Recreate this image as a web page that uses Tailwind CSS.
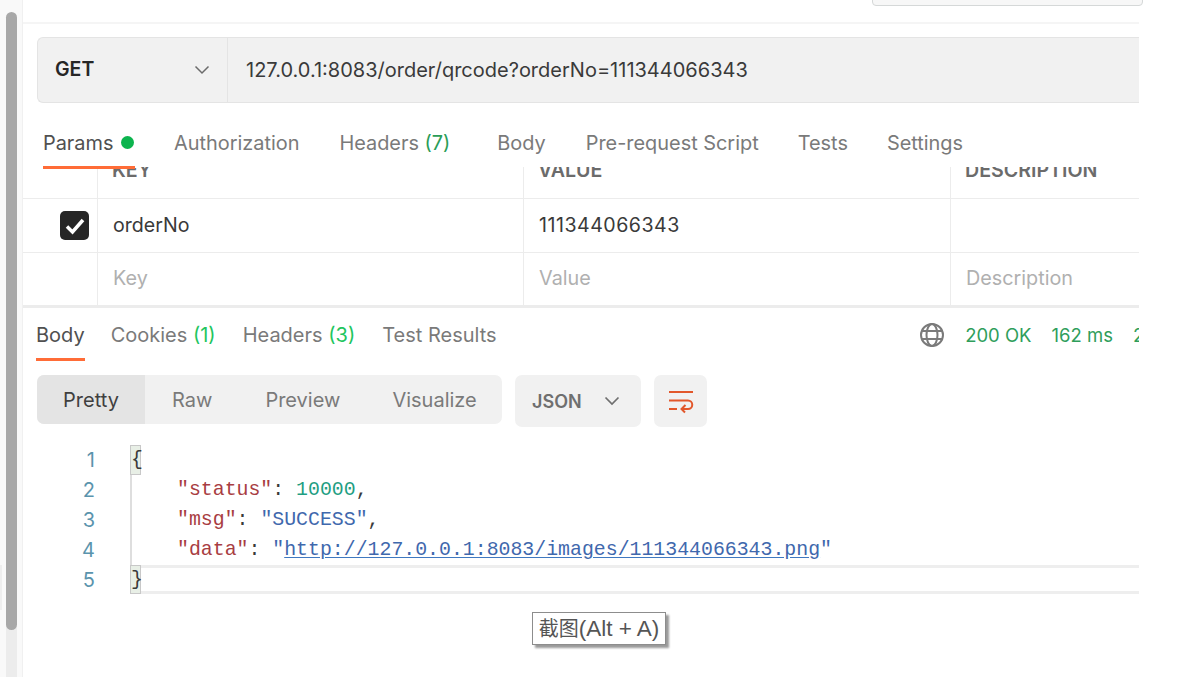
<!DOCTYPE html>
<html lang="en">
<head>
    <meta charset="UTF-8">
    <meta name="viewport" content="width=device-width, initial-scale=1.0">
    <title>Postman</title>
    <script src="https://cdn.jsdelivr.net/npm/@tailwindcss/browser@4"></script>
</head>
<body class="relative h-[677px] w-[1179px] overflow-hidden bg-white font-['Inter',sans-serif]">
    <div class="flex h-full">
        <!-- window scrollbar -->
        <div class="flex w-[23px] shrink-0 flex-col border-r border-[#f0f0f0] bg-[#f9f9f9] pl-[6px] pr-[5px] pt-[12px]">
            <div class="relative z-10 h-[618px] rounded-full bg-[#a8a8a8]"></div>
            <div class="-mt-[6px] flex-1 bg-[#ececec]"></div>
        </div>

        <main class="w-[1116px] shrink-0 overflow-hidden">
            <div class="h-[24px] border-b-2 border-[#f5f5f5]"></div>

            <!-- url bar -->
            <div class="ml-[14px] mt-[13px] flex h-[66px] rounded-l-[6px] border-y border-l border-[#e4e4e4] bg-[#f1f1f1] text-[20px]">
                <div class="flex w-[190px] items-center justify-between border-r border-[#e4e4e4] pl-[17px] pr-[17px]">
                    <span class="text-[19.5px] font-semibold text-[#262626]">GET</span>
                    <svg class="h-[16px] w-[16px] text-[#6b6b6b]" viewBox="0 0 16 16" fill="none" stroke="currentColor" stroke-width="1.5"><path d="M1.5 4.5 8 11l6.500-6.500"/></svg>
                </div>
                <div class="flex items-center pl-[18px] text-[#3a3a3a]">127.0.0.1:8083/order/qrcode?orderNo=111344066343</div>
            </div>

            <!-- request tabs -->
            <div class="ml-[20px] mt-[24px] flex h-[40px] items-start gap-[40px] text-[19.9px] leading-[32px] text-[#7a7a7a]">
                <div class="flex h-[40px] w-[91px] items-start gap-[8px] text-[#505050]">Params <span class="mt-[9px] h-[13px] w-[13px] shrink-0 rounded-full bg-[#0cb44e]"></span></div>
                <div>Authorization</div>
                <div>Headers <span class="text-[#2a9d57]">(7)</span></div>
                <div class="ml-[7px]">Body</div>
                <div>Pre-request Script</div>
                <div class="-ml-[1px]">Tests</div>
                <div class="-ml-[1px]">Settings</div>
            </div>

            <!-- params table -->
            <div class="relative">
                <div class="absolute left-[20px] top-[-1px] z-10 h-[3px] w-[92px] bg-[#ff6c37]"></div>
                <div class="grid h-[32px] grid-cols-[75px_426px_427px_1fr] overflow-hidden border-b border-[#ececec] text-[19.6px] font-semibold text-[#6b6b6b]">
                    <div class="border-r border-[#ececec]"></div>
                    <div class="border-r border-[#ececec] pl-[14px]"><div class="-mt-[11px]">KEY</div></div>
                    <div class="border-r border-[#ececec] pl-[14px]"><div class="-mt-[11px]">VALUE</div></div>
                    <div class="pl-[14px]"><div class="-mt-[11px]">DESCRIPTION</div></div>
                </div>
                <div class="grid h-[54px] grid-cols-[75px_426px_427px_1fr] items-stretch border-b border-[#ececec] text-[19.6px] text-[#3a3a3a]">
                    <div class="flex items-center justify-end border-r border-[#ececec] pr-[8px]">
                        <span class="flex h-[29px] w-[29px] items-center justify-center rounded-[5px] bg-[#262626]">
                            <svg class="h-[20px] w-[20px]" viewBox="0 0 20 20" fill="none" stroke="white" stroke-width="3.5"><path d="M2 10.500 7.500 16 18 4"/></svg>
                        </span>
                    </div>
                    <div class="flex items-center border-r border-[#ececec] pl-[15px]">orderNo</div>
                    <div class="flex items-center border-r border-[#ececec] pl-[15px] tracking-[0.5px]">111344066343</div>
                    <div></div>
                </div>
                <div class="grid h-[55px] grid-cols-[75px_426px_427px_1fr] border-b-[3px] border-[#ececec] text-[19.8px] text-[#b0b0b0]">
                    <div class="border-r border-[#ececec]"></div>
                    <div class="flex items-center border-r border-[#ececec] pl-[15px]">Key</div>
                    <div class="flex items-center border-r border-[#ececec] pl-[15px]">Value</div>
                    <div class="flex items-center pl-[15px]">Description</div>
                </div>
            </div>

            <!-- response tabs -->
            <div class="flex h-[53px] pl-[13px] text-[20px] leading-[54px] text-[#7a7a7a]">
                <div class="h-[53px] border-b-[3px] border-[#ff6c37] text-[#505050]">Body</div>
                <div class="ml-[26px]">Cookies <span class="text-[#22c55e]">(1)</span></div>
                <div class="ml-[27px]">Headers <span class="text-[#22c55e]">(3)</span></div>
                <div class="ml-[27px]">Test Results</div>
                <div class="ml-auto flex items-center text-[18.5px] text-[#2f9e5b]">
                    <svg class="mr-[20px] h-[26px] w-[26px] text-[#7a7a7a]" viewBox="0 0 26 26" fill="none" stroke="currentColor" stroke-width="2"><circle cx="13" cy="13" r="11"/><ellipse cx="13" cy="13" rx="5.500" ry="11"/><path d="M3 9h20M3 17h20"/></svg>
                    <span>200 OK</span>
                    <span class="ml-[20px]">162 ms</span>
                    <span class="ml-[20px] w-[6px] overflow-hidden">2</span>
                </div>
            </div>

            <!-- view controls -->
            <div class="ml-[14px] mt-[14px] flex items-start text-[20px]">
                <div class="flex h-[49px] w-[465px] items-center rounded-[7px] bg-[#f1f1f1] text-[#7a7a7a]">
                    <div class="flex h-full w-[108px] items-center justify-center rounded-l-[7px] bg-[#e4e4e4] text-[#3f3f3f]">Pretty</div>
                    <div class="ml-[27px]">Raw</div>
                    <div class="ml-[53px]">Preview</div>
                    <div class="ml-[52px]">Visualize</div>
                </div>
                <div class="ml-[13px] flex h-[52px] w-[126px] items-center rounded-[7px] bg-[#f1f1f1] pl-[17px] text-[18px] font-semibold text-[#6f6f6f]">
                    <span>JSON</span>
                    <svg class="ml-[22px] h-[16px] w-[16px]" viewBox="0 0 16 16" fill="none" stroke="currentColor" stroke-width="1.7"><path d="M1.500 4.500 8 11l6.500-6.500"/></svg>
                </div>
                <div class="ml-[13px] flex h-[52px] w-[53px] items-center justify-center rounded-[7px] bg-[#f1f1f1]">
                    <svg class="h-[26px] w-[26px]" viewBox="0 0 26 26" fill="none" stroke="#e2572b" stroke-width="2"><path d="M1 4h24M1 21h8"/><path d="M1 12.500h19a3.800 3.800 0 0 1 0 8.500h-6"/><path d="m17.500 17-4 4 3.500 3.500"/></svg>
                </div>
            </div>

            <!-- response code -->
            <div class="mt-[18px] grid grid-cols-[72px_1fr] font-['Liberation_Mono',monospace] text-[19.85px] leading-[30px]">
                <div class="text-right font-['Inter',sans-serif] text-[20px] text-[#5b94ad]">
                    <div>1</div><div>2</div><div>3</div><div>4</div><div>5</div>
                </div>
                <div class="relative ml-[35px] text-[#3a3a3a]">
                    <div class="flex h-[30px]"><span class="w-[11px] border border-[#c8c8c8] bg-[#e8efe6] leading-[28px]">{</span></div>
                    <div class="h-[90px] whitespace-pre-wrap border-l-2 border-[#dedede] pl-[45px]"><div><span class="text-[#a83d42]">"status"</span>: <span class="text-[#1f9e82]">10000</span>,</div><div><span class="text-[#a83d42]">"msg"</span>: <span class="text-[#3f68ad]">"SUCCESS"</span>,</div><div><span class="text-[#a83d42]">"data"</span>: <span class="text-[#3f68ad]">"<span class="underline decoration-[#3f78c0] underline-offset-2">http://127.0.0.1:8083/images/111344066343.png</span>"</span></div></div>
                    <div class="flex h-[29px] border-y-[3px] border-[#eeeeee]"><span class="-mt-[3px] h-[29px] w-[11px] border border-[#c8c8c8] bg-[#e8efe6] leading-[28px]">}</span></div>
                </div>
            </div>
        </main>
    </div>

    <!-- overlays: cropped button at top, screenshot tooltip, edge of the window behind -->
    <div class="absolute left-[872px] top-[-2px] h-[8px] w-[271px] rounded-b-[4px] border border-[#d5d8d8] bg-[#f7f7f7]"></div>
    <div class="absolute left-0 top-[565px] h-[45px] w-[2px] bg-[#eeeeee]"></div>
    <div class="absolute left-[532px] top-[612px] flex h-[33px] w-[134px] items-center justify-center whitespace-nowrap border border-[#8d8d8d] bg-white font-['Liberation_Sans','Noto_Sans_CJK_SC',sans-serif] text-[20px] text-[#555] shadow-[3px_3px_2px_#9a9a9a]">截图<span class="text-[22.5px]">(Alt + A)</span></div>
</body>
</html>
